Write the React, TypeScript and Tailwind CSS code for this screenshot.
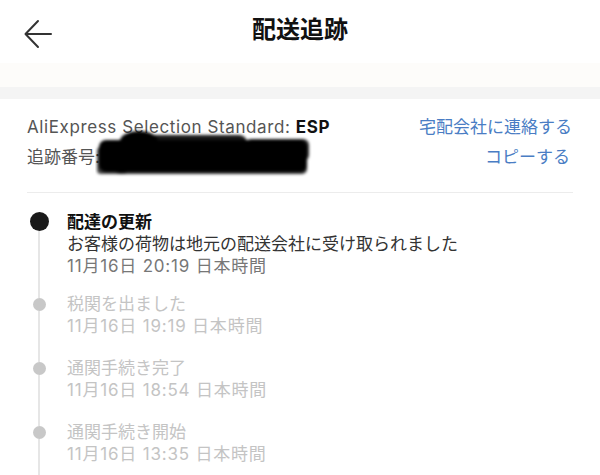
import React from "react";

const font = {
  fontFamily: 'Inter, "Noto Sans CJK JP", "Noto Sans", sans-serif',
};

type Ev = { title: string; desc?: string; time: string; active?: boolean };

const events: Ev[] = [
  {
    title: "配達の更新",
    desc: "お客様の荷物は地元の配送会社に受け取られました",
    time: "11月16日 20:19 日本時間",
    active: true,
  },
  { title: "税関を出ました", time: "11月16日 19:19 日本時間" },
  { title: "通関手続き完了", time: "11月16日 18:54 日本時間" },
  { title: "通関手続き開始", time: "11月16日 13:35 日本時間" },
];

function Redaction() {
  return (
    <svg
      className="absolute left-[68px] top-[-16px]"
      width="218"
      height="48"
      viewBox="0 0 218 48"
    >
      <defs>
        <filter id="bl" x="-10%" y="-30%" width="120%" height="160%">
          <feGaussianBlur stdDeviation="1.6" />
        </filter>
      </defs>
      <g filter="url(#bl)" fill="#000">
        <rect x="4" y="11" width="208" height="32" rx="7" />
        <rect x="2" y="18" width="30" height="27" rx="4" opacity="0.75" />
        <ellipse cx="44" cy="12" rx="19" ry="10" />
        <rect x="30" y="6" width="122" height="18" rx="8" opacity="0.9" />
        <rect x="150" y="10" width="64" height="22" rx="6" opacity="0.85" />
        <rect x="20" y="32" width="192" height="13" rx="5" opacity="0.8" />
      </g>
    </svg>
  );
}

export default function App() {
  return (
    <div className="w-[600px] h-[475px] overflow-hidden bg-white" style={font}>
      {/* header */}
      <div className="relative h-[63px] flex items-center justify-center">
        <svg
          className="absolute left-[24px] top-[19px]"
          width="30"
          height="30"
          viewBox="0 0 30 30"
          fill="none"
          stroke="#333"
          strokeWidth="2"
          strokeLinecap="round"
          strokeLinejoin="round"
        >
          <path d="M27 15H2" />
          <path d="M14 2L1.5 15L14 28" />
        </svg>
        <div className="text-[24px] font-bold text-[#111] leading-none mt-[-4px]">
          配送追跡
        </div>
      </div>
      <div className="h-[24px] bg-[#fdfcfa]" />
      <div className="h-[12px] bg-[#f4f4f4]" />

      {/* carrier info */}
      <div className="px-[27px] pt-[14px]">
        <div className="flex justify-between items-center h-[30px] text-[17px]">
          <div className="text-[#555] tracking-[0.6px]">
            AliExpress Selection Standard: <span className="font-bold text-[#111]">ESP</span>
          </div>
          <div className="text-[#4a7dc4] pr-[1px]">宅配会社に連絡する</div>
        </div>
        <div className="flex justify-between items-center h-[30px] text-[17px]">
          <div className="relative text-[#555]">
            追跡番号:
            <Redaction />
          </div>
          <div className="text-[#4a7dc4] pr-[3px]">コピーする</div>
        </div>
        <div className="mt-[19px] h-px bg-[#ececec]" />

        {/* timeline */}
        <div className="pt-[18px]">
          {events.map((e, i) => (
            <div key={i} className="flex">
              <div className="w-[24px] flex flex-col items-center shrink-0">
                {e.active ? (
                  <>
                    <div className="h-[1px]" />
                    <div className="w-[19px] h-[19px] rounded-full bg-[#1a1a1a]" />
                  </>
                ) : (
                  <>
                    <div className="w-[2px] h-[5px] bg-[#e6e6e6]" />
                    <div className="w-[13px] h-[13px] rounded-full bg-[#c8c8c8]" />
                  </>
                )}
                <div className="w-[2px] flex-1 bg-[#e6e6e6]" />
              </div>
              <div
                className={
                  "ml-[16px] text-[17px] leading-[22px] " +
                  (e.active ? "pb-[16px]" : "pb-[20px]")
                }
              >
                <div className={e.active ? "font-bold text-[#111]" : "text-[#c4c4c4]"}>
                  {e.title}
                </div>
                {e.desc && <div className="text-[#333]">{e.desc}</div>}
                <div
                  className={
                    "tracking-[0.8px] " + (e.active ? "text-[#777]" : "text-[#c4c4c4]")
                  }
                >
                  {e.time}
                </div>
              </div>
            </div>
          ))}
        </div>
      </div>
    </div>
  );
}
